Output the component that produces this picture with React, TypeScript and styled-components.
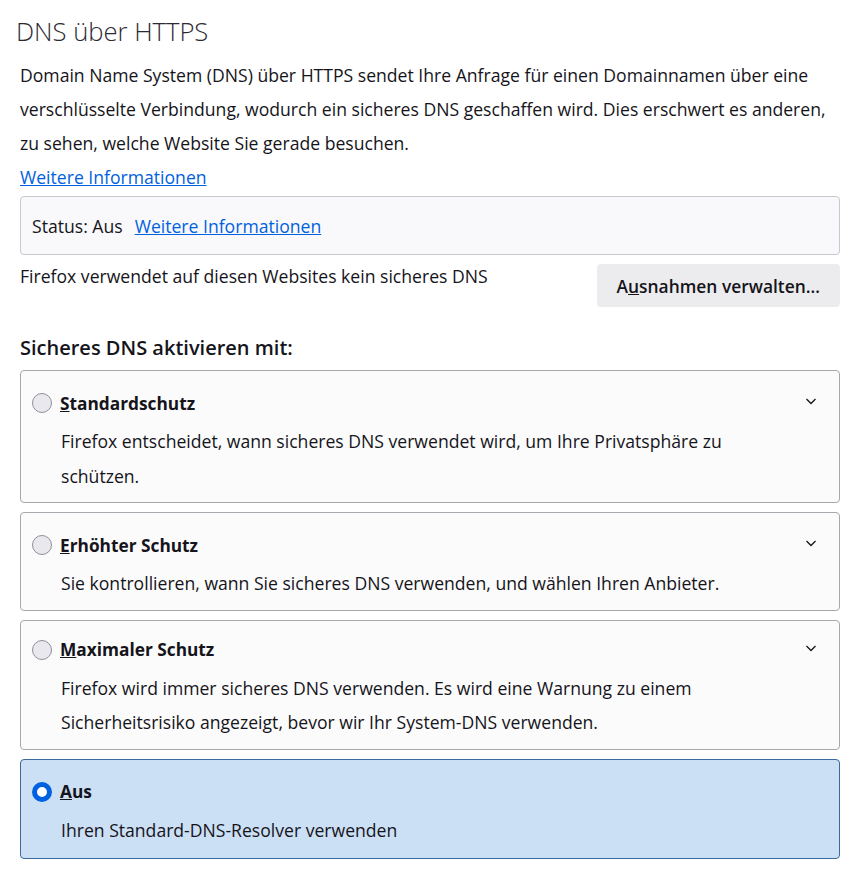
import React from 'react'
import styled, { createGlobalStyle, css } from 'styled-components'

const GlobalStyle = createGlobalStyle`
    body {
        margin: 0;
        background: #ffffff;
        color: #15141a;
        font-family: 'Open Sans', 'Noto Sans', sans-serif;
    }
`

const Page = styled.div`
    padding: 12px 11px 0 20px;
    display: flex;
    flex-direction: column;
`

const Title = styled.h1`
    margin: 4px 0 0 -4px;
    font-size: 25.6px;
    font-weight: 300;
    line-height: 32px;
    color: #2b2a33;
`

const Intro = styled.p`
    margin: 10px 0 0;
    font-size: 17.6px;
    line-height: 34px;
`

const Link = styled.a`
    color: #0061e0;
    text-decoration: underline;
    font-size: 17.6px;
    cursor: pointer;
`

const StatusBox = styled.div`
    margin-top: 2px;
    height: 57px;
    display: flex;
    align-items: center;
    gap: 12px;
    padding: 0 11px;
    background: #f9f9fb;
    border: 1px solid #c8c8ce;
    border-radius: 4px;
    font-size: 17.6px;
`

const ExceptionsRow = styled.div`
    margin-top: 9px;
    display: flex;
    justify-content: space-between;
    align-items: flex-start;
    font-size: 17.6px;
    line-height: 24px;
`

const Button = styled.button`
    height: 43px;
    padding: 0 20px;
    border: none;
    border-radius: 4px;
    background: #ececef;
    color: #15141a;
    font-family: inherit;
    font-size: 17.4px;
    font-weight: 600;
`

const Key = styled.span`
    text-decoration: underline;
`

const SectionHeading = styled.h2`
    margin: 27px 0 0;
    font-size: 20px;
    font-weight: 600;
    line-height: 28px;
`

const Options = styled.div`
    margin-top: 8px;
    display: flex;
    flex-direction: column;
    gap: 9px;
`

const Card = styled.div<{ $selected?: boolean; $compact?: boolean }>`
    position: relative;
    padding: ${(p) => (p.$compact ? 15 : 18)}px 11px 9px 11px;
    border: 1px solid #a7a7ad;
    border-radius: 4px;
    background: #fbfbfc;
    ${(p) =>
        p.$selected &&
        css`
            background: #cbdff5;
            border-color: #3d6a9c;
            padding-bottom: 10.5px;
        `}
`

const CardHead = styled.div`
    display: flex;
    align-items: center;
    gap: 8px;
    height: 28px;
`

const Radio = styled.span<{ $checked?: boolean }>`
    width: 20px;
    height: 20px;
    box-sizing: border-box;
    border-radius: 50%;
    flex-shrink: 0;
    border: 1px solid #8f8f9d;
    background: #e9e9ed;
    ${(p) =>
        p.$checked &&
        css`
            border: 5px solid #0061e0;
            background: #ffffff;
        `}
`

const Label = styled.span`
    font-size: 17.3px;
    font-weight: 700;
`

const Chevron = styled.span<{ $compact?: boolean }>`
    position: absolute;
    top: ${(p) => (p.$compact ? 19 : 22)}px;
    right: 20px;
    width: 16px;
    height: 16px;
    display: flex;
`

const Description = styled.div`
    margin: 7px 50px 0 29px;
    font-size: 17.6px;
    line-height: 34.5px;
`

const ChevronIcon = () => (
    <svg width="16" height="16" viewBox="0 0 16 16" fill="none">
        <path d="M3.5 6 8 10.5 12.5 6" stroke="#15141a" strokeWidth="1.3" />
    </svg>
)

type OptionProps = {
    accessKey: string
    rest: string
    text: string
    selected?: boolean
    expandable?: boolean
    compact?: boolean
}

const Option = ({ accessKey, rest, text, selected, expandable, compact }: OptionProps) => (
    <Card $selected={selected} $compact={compact}>
        <CardHead>
            <Radio $checked={selected} />
            <Label>
                <Key>{accessKey}</Key>
                {rest}
            </Label>
        </CardHead>
        {expandable && (
            <Chevron $compact={compact}>
                <ChevronIcon />
            </Chevron>
        )}
        <Description>{text}</Description>
    </Card>
)

export default function App() {
    return (
        <>
            <GlobalStyle />
            <Page>
                <Title>DNS über HTTPS</Title>
                <Intro>
                    Domain Name System (DNS) über HTTPS sendet Ihre Anfrage für
                    einen Domainnamen über eine verschlüsselte Verbindung,
                    wodurch ein sicheres DNS geschaffen wird. Dies erschwert es
                    anderen, zu sehen, welche Website Sie gerade besuchen.
                    <br />
                    <Link>Weitere Informationen</Link>
                </Intro>
                <StatusBox>
                    <span>Status: Aus</span>
                    <Link>Weitere Informationen</Link>
                </StatusBox>
                <ExceptionsRow>
                    <span>Firefox verwendet auf diesen Websites kein sicheres DNS</span>
                    <Button>
                        A<Key>u</Key>snahmen verwalten…
                    </Button>
                </ExceptionsRow>
                <SectionHeading>Sicheres DNS aktivieren mit:</SectionHeading>
                <Options>
                    <Option
                        accessKey="S"
                        rest="tandardschutz"
                        text="Firefox entscheidet, wann sicheres DNS verwendet wird, um Ihre Privatsphäre zu schützen."
                        expandable
                    />
                    <Option
                        accessKey="E"
                        rest="rhöhter Schutz"
                        text="Sie kontrollieren, wann Sie sicheres DNS verwenden, und wählen Ihren Anbieter."
                        expandable
                    />
                    <Option
                        accessKey="M"
                        rest="aximaler Schutz"
                        text="Firefox wird immer sicheres DNS verwenden. Es wird eine Warnung zu einem Sicherheitsrisiko angezeigt, bevor wir Ihr System-DNS verwenden."
                        expandable
                        compact
                    />
                    <Option
                        accessKey="A"
                        rest="us"
                        text="Ihren Standard-DNS-Resolver verwenden"
                        selected
                    />
                </Options>
            </Page>
        </>
    )
}
